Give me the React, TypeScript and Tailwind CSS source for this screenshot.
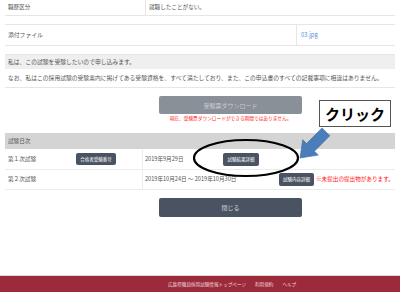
import React from "react";

const SmallButton: React.FC<{ label: string; className?: string }> = ({ label, className }) => (
  <span
    className={`inline-flex items-center justify-center rounded-[2px] bg-[#4a5361] text-white text-[4.5px] leading-none ${className ?? ""}`}
  >
    {label}
  </span>
);

const App: React.FC = () => {
  return (
    <div className="relative w-[400px] h-[292px] overflow-hidden bg-white flex flex-col font-['Noto_Sans_CJK_JP',sans-serif] text-[#555]">
      <div className="px-[5px]">
        {/* 職歴区分 */}
        <div className="flex h-[16px] border-b border-[#e6e6e6] text-[5.6px]">
          <div className="w-[141px] flex items-center pl-[3px] border-r border-[#e6e6e6]">職歴区分</div>
          <div className="flex items-center pl-[3px]">就職したことがない。</div>
        </div>

        {/* 添付ファイル */}
        <div className="mt-[8px] flex h-[22px] border-y border-[#e6e6e6] text-[5.8px]">
          <div className="w-[292px] flex items-center pl-[3px] border-r border-[#e6e6e6]">添付ファイル</div>
          <div className="flex items-end pb-[5px] pl-[4px] text-[#4a8fd6]">03.jpg</div>
        </div>

        {/* 申込 */}
        <div className="mt-[8px] text-[5.8px]">
          <div className="h-[15px] bg-[#efefef] border-t border-[#e6e6e6] flex items-center pl-[3px]">
            私は、この試験を受験したいので申し込みます。
          </div>
          <div className="h-[19px] border-b border-[#e6e6e6] flex items-center pl-[3px] whitespace-nowrap">
            なお、私はこの採用試験の受験案内に掲げてある受験資格を、すべて満たしており、また、この申込書のすべての記載事項に相違はありません。
          </div>
        </div>
      </div>

      {/* 受験票ダウンロード */}
      <div className="mt-[8px] ml-[159px] w-[143px] flex flex-col items-center">
        <div className="w-full h-[18px] rounded-[2px] bg-[#8a9098] flex items-center justify-center text-[6px] text-[#c9cdd2]">
          受験票ダウンロード
        </div>
        <div className="mt-[1px] h-[8px] flex items-center text-[4.7px] text-[#ff1a1a] whitespace-nowrap">
          現在、受験票ダウンロードができる期間ではありません。
        </div>
      </div>

      {/* 試験日次 */}
      <div className="mt-[10px] px-[5px] text-[5.6px]">
        <div className="h-[16px] bg-[#d4d4d4] flex items-center pl-[3px]">試験日次</div>
        <div className="flex h-[21px] border-b border-[#ececec]">
          <div className="w-[138px] flex items-center pl-[3px] border-r border-[#ececec]">
            <span className="w-[68px]">第１次試験</span>
            <SmallButton label="合格者受験番号" className="w-[40px] h-[12px]" />
          </div>
          <div className="flex items-center pl-[2px]">
            <span className="w-[78px]">2019年9月29日</span>
            <SmallButton label="試験結果詳細" className="w-[36px] h-[13px]" />
          </div>
        </div>
        <div className="flex h-[20px] border-b border-[#ececec]">
          <div className="w-[138px] flex items-center pl-[3px] border-r border-[#ececec]">第２次試験</div>
          <div className="flex items-center pl-[2px] whitespace-nowrap">
            <span className="w-[134px]">2019年10月24日 ～ 2019年10月30日</span>
            <SmallButton label="試験内容詳細" className="w-[35px] h-[13px]" />
            <span className="ml-[2px] text-[5.6px] text-[#ff1a1a]">※未提出の提出物があります。</span>
          </div>
        </div>
      </div>

      {/* 閉じる */}
      <div className="mt-[8px] ml-[159px] w-[143px] h-[19px] rounded-[2px] bg-[#4a5361] flex items-center justify-center text-[6px] text-[#d8dce0]">
        閉じる
      </div>

      <div className="flex-1" />

      {/* footer */}
      <div className="border-t border-[#dcdcdc] h-[17px] bg-[#9b2b3b] flex items-center pl-[168px] gap-[9px] text-[4.6px] text-[#f2d6db] whitespace-nowrap">
        <span>広島県職員採用試験情報トップページ</span>
        <span>利用規約</span>
        <span>ヘルプ</span>
      </div>

      {/* annotation: ellipse */}
      <svg className="absolute left-0 top-0 pointer-events-none" width="400" height="292">
        <ellipse cx="246" cy="158" rx="52" ry="18" fill="none" stroke="#000" strokeWidth="2.2" />
        <polygon
          points="300,158 318.3,155.1 314.4,151.3 329.8,135.7 322,127.9 306.6,143.5 302.7,139.7"
          fill="#4a7ebb"
          stroke="#3a6aa3"
          strokeWidth="0.6"
        />
      </svg>

      {/* annotation: クリック */}
      <div className="absolute left-[319px] top-[100px] w-[72px] h-[27px] bg-white border border-[#555] flex items-center justify-center font-['Noto_Sans_CJK_JP',sans-serif] font-bold text-[15px] text-black leading-none">
        クリック
      </div>
    </div>
  );
};

export default App;
